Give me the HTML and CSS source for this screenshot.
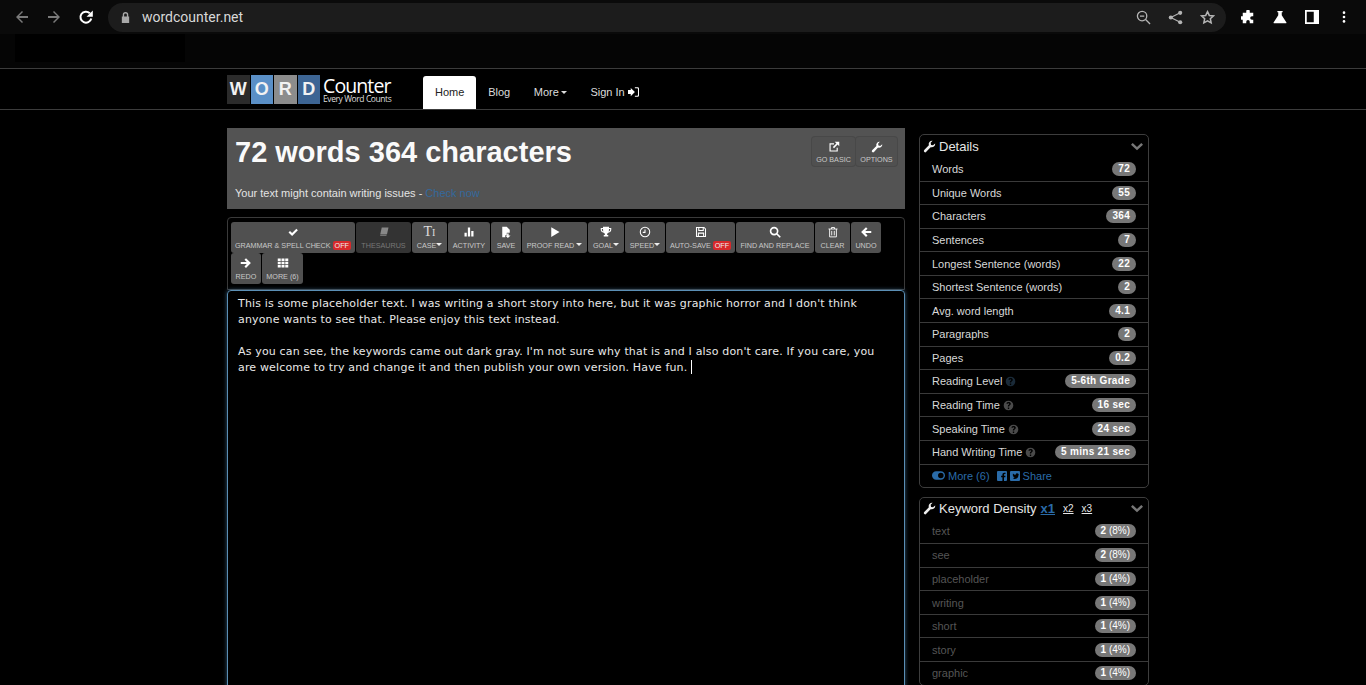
FILE: index.html
```html
<!DOCTYPE html>
<html lang="en">
<head>
  <meta charset="UTF-8">
  <meta name="viewport" content="width=device-width, initial-scale=1.0">
  <title>Word Counter</title>
  <link rel="stylesheet" href="styles.css">
</head>
<body>
<svg class="sprites" width="0" height="0">
  <symbol id="i-wrench" viewBox="0 0 16 16"><path d="M15 4.200a4.300 4.300 0 0 1-5.600 4.600L4 14.600a1.600 1.600 0 0 1-2.500-2.200L7.200 6.600A4.300 4.300 0 0 1 11.800 1L9.400 3.500l.5 2.500 2.400.6z"/></symbol>
  <symbol id="i-help" viewBox="0 0 16 16"><path fill-rule="evenodd" d="M8 1a7 7 0 1 0 0 14A7 7 0 0 0 8 1zM7 11h2v2H7zm1-8c2 0 3.300 1 3.300 2.600 0 1.300-.8 1.900-1.500 2.400-.6.400-.8.600-.8 1.200v.3H7v-.5c0-1.100.5-1.700 1.200-2.200.6-.4.900-.7.900-1.100 0-.5-.4-.8-1.100-.8-.8 0-1.400.4-1.900 1L4.800 4.600C5.600 3.600 6.600 3 8 3z"/></symbol>
</svg>

<div class="chrome-bar">
  <div class="chrome-nav">
    <svg class="ic-dim" viewBox="0 0 16 16"><path d="M14 7H5l4-4-1-1-6 6 6 6 1-1-4-4h9z"/></svg>
    <svg class="ic-dim" viewBox="0 0 16 16"><path d="M2 7h9L7 3l1-1 6 6-6 6-1-1 4-4H2z"/></svg>
    <svg viewBox="0 0 16 16"><path d="M13.300 9.500a5.500 5.500 0 1 1-1.500-5.300" fill="none" stroke="#fff" stroke-width="2"/><path d="M14.800 1.500v6.300H8.500z" fill="#fff"/></svg>
  </div>
  <div class="omnibox">
    <svg class="lock" viewBox="0 0 12 14"><path d="M3 6V4a3 3 0 0 1 6 0v2h1v7H2V6zm1.500 0h3V4a1.500 1.500 0 0 0-3 0z"/></svg>
    <span class="url">wordcounter.net</span>
    <div class="omni-icons">
      <svg viewBox="0 0 16 16" fill="none" stroke="#b5b5b5" stroke-width="1.400"><circle cx="6.500" cy="6.500" r="5"/><path d="M10.200 10.200 15 15M4.200 6.500h4.600"/></svg>
      <svg viewBox="0 0 16 16" fill="#b5b5b5"><circle cx="13" cy="3" r="2.200"/><circle cx="3" cy="8" r="2.200"/><circle cx="13" cy="13" r="2.200"/><path d="M3 8l10-5M3 8l10 5" stroke="#b5b5b5" stroke-width="1.200"/></svg>
      <svg viewBox="0 0 16 16" fill="none" stroke="#b5b5b5" stroke-width="1.600"><path d="M8 1.800l1.900 4 4.400.5-3.300 3 .9 4.400L8 11.500l-3.900 2.200.9-4.400-3.300-3 4.400-.5z"/></svg>
    </div>
  </div>
  <div class="chrome-ext">
    <svg viewBox="0 0 16 16"><path d="M6 1.500a2 2 0 0 1 4 0V3h4v4h-1.500a2 2 0 0 0 0 4H14v4h-4v-1.500a2 2 0 0 0-4 0V15H2v-4H.5a2 2 0 0 1 0-4H2V3h4z"/></svg>
    <svg viewBox="0 0 16 16"><path d="M5 1h6v1.500h-1V6l5.500 8.500a.6.600 0 0 1-.5.500H1a.6.600 0 0 1-.5-.5L6 6V2.500H5z"/></svg>
    <svg viewBox="0 0 16 16"><path fill-rule="evenodd" d="M0 0h16v16H0zm2 2v12h8V2z"/></svg>
    <svg viewBox="0 0 16 16"><circle cx="8" cy="3" r="1.500"/><circle cx="8" cy="8" r="1.500"/><circle cx="8" cy="13" r="1.500"/></svg>
  </div>
</div>

<div class="bookmarks"></div>

<nav class="site-nav">
  <div class="wrap nav-inner">
    <div class="logo">
      <div class="logo-tiles">
        <span class="tile t-w">W</span><span class="tile t-o">O</span><span class="tile t-r">R</span><span class="tile t-d">D</span>
      </div>
      <div class="logo-text">
        <span class="logo-big">Counter</span>
        <span class="logo-small">Every Word Counts</span>
      </div>
    </div>
    <ul class="nav-links">
      <li class="active">Home</li>
      <li>Blog</li>
      <li>More<i class="caret"></i></li>
      <li>Sign In
        <svg class="signin" viewBox="0 0 16 14"><path d="M0 4h4V1l6 6-6 6v-3H0z"/><path d="M10 0h4a2 2 0 0 1 2 2v10a2 2 0 0 1-2 2h-4v-1.500h3.500a1 1 0 0 0 1-1v-9a1 1 0 0 0-1-1H10z"/></svg>
      </li>
    </ul>
  </div>
</nav>

<main class="wrap columns">
  <section class="left">
    <div class="counter-box">
      <div class="counter-top">
        <h1>72 words 364 characters</h1>
        <div class="tools">
          <button class="tbtn b-basic">
            <svg class="ic" viewBox="0 0 16 16"><path d="M2 3h6v1.500H3.500v8h8V9H13v5H2z"/><path d="M9 1h6v6l-2.200-2.200L8 9.500 6.500 8l4.700-4.800z"/></svg>
            GO BASIC
          </button>
          <button class="tbtn b-options">
            <svg class="ic" viewBox="0 0 16 16"><use href="#i-wrench"/></svg>
            OPTIONS
          </button>
        </div>
      </div>
      <p class="issues">Your text might contain writing issues - <a>Check now</a></p>
    </div>

    <div class="toolbar">
      <button class="tbtn b-grammar">
        <svg class="ic" viewBox="0 0 16 16"><path d="M2 8.500 4 6.500l2.800 2.800L12.500 3.500l2 2-7.700 7.700z"/></svg>
        <span>GRAMMAR &amp; SPELL CHECK <b class="off">OFF</b></span>
      </button>
      <button class="tbtn tbtn-dim b-thesaurus">
        <svg class="ic" viewBox="0 0 16 16"><path d="M5 2h9l-2 9H3zM3 11.500h8.500l-.3 1.500H3.500a1 1 0 0 1-.5-1.500z"/></svg>
        THESAURUS
      </button>
      <button class="tbtn b-case">
        <span class="tt">T<small>I</small></span>
        <span>CASE<i class="caret caret-tight"></i></span>
      </button>
      <button class="tbtn b-activity">
        <svg class="ic" viewBox="0 0 16 16"><path d="M2 9h3v5H2zM6.500 2h3v12h-3zM11 6.500h3V14h-3z"/></svg>
        ACTIVITY
      </button>
      <button class="tbtn b-save">
        <svg class="ic" viewBox="0 0 16 16"><path d="M3 1h6l4 4v4H9v3H7v3H3z"/><path d="M9.500 10h2v2.500H14L10.500 16 7 12.500h2.500z"/></svg>
        SAVE
      </button>
      <button class="tbtn b-proof">
        <svg class="ic" viewBox="0 0 16 16"><path d="M3 1.500 14 8 3 14.500z"/></svg>
        <span>PROOF READ <i class="caret caret-tight"></i></span>
      </button>
      <button class="tbtn b-goal">
        <svg class="ic" viewBox="0 0 16 16"><path fill-rule="evenodd" d="M4 1h8v1.500h3V5c0 2-1.500 3.500-4 4-.4.600-1 1-1.500 1.200V12H11v2H5v-2h1.500v-1.800C6 10 5.400 9.600 5 9 2.500 8.500 1 7 1 5V2.500h3zM2.500 4v1c0 1 .7 1.900 1.900 2.400C4.100 6.400 4 5.200 4 4zm11 0H12c0 1.200-.1 2.400-.4 3.400 1.200-.5 1.900-1.400 1.900-2.400z"/></svg>
        <span>GOAL<i class="caret caret-tight"></i></span>
      </button>
      <button class="tbtn b-speed">
        <svg class="ic ic-line" viewBox="0 0 16 16" stroke-width="1.400"><circle cx="8" cy="8" r="6.300"/><path d="M8 4.500V8.500H5"/></svg>
        <span>SPEED<i class="caret caret-tight"></i></span>
      </button>
      <button class="tbtn b-autosave">
        <svg class="ic ic-line" viewBox="0 0 16 16" stroke-width="1.400"><path d="M2 2h10l2 2v10H2z"/><path d="M5 2v4h6V2M4.500 14V9.500h7V14"/></svg>
        <span>AUTO-SAVE <b class="off">OFF</b></span>
      </button>
      <button class="tbtn b-find">
        <svg class="ic ic-line" viewBox="0 0 16 16" stroke-width="2.200"><circle cx="6.800" cy="6.800" r="4.700"/><path d="M10.300 10.300 15 15"/></svg>
        FIND AND REPLACE
      </button>
      <button class="tbtn b-clear">
        <svg class="ic ic-line" viewBox="0 0 16 16" stroke-width="1.200"><path d="M2 4h12M6 4V2h4v2M3.500 4v10.500h9V4M6.300 6.500v6M9.700 6.500v6"/></svg>
        CLEAR
      </button>
      <button class="tbtn b-undo">
        <svg class="ic" viewBox="0 0 16 16"><path d="M8 1.500 10 3.500 7 6.600h8v2.800H7l3 3.100-2 2L1.500 8z"/></svg>
        UNDO
      </button>
      <button class="tbtn b-undo">
        <svg class="ic" viewBox="0 0 16 16"><path d="M8 1.500 6 3.500 9 6.600H1v2.800h8l-3 3.100 2 2L14.500 8z"/></svg>
        REDO
      </button>
      <button class="tbtn b-more">
        <svg class="ic" viewBox="0 0 16 16"><path d="M1 2h4v3.300H1zM6 2h4v3.300H6zM11 2h4v3.300h-4zM1 6.300h4v3.300H1zM6 6.300h4v3.300H6zM11 6.300h4v3.300h-4zM1 10.700h4V14H1zM6 10.700h4V14H6zM11 10.700h4V14h-4z"/></svg>
        MORE (6)
      </button>
    </div>

    <div class="editor">
      <p>This is some placeholder text. I was writing a short story into here, but it was graphic horror and I don't think anyone wants to see that. Please enjoy this text instead.</p>
      <p>As you can see, the keywords came out dark gray. I'm not sure why that is and I also don't care. If you care, you are welcome to try and change it and then publish your own version. Have fun. <span class="cursor"></span></p>
    </div>
  </section>

  <aside class="right">
    <div class="panel">
      <div class="panel-head">
        <svg class="wrench" viewBox="0 0 16 16"><use href="#i-wrench"/></svg>
        <span>Details</span>
        <svg class="chev" viewBox="0 0 14 10"><path d="M2 1 7 5.500 12 1l2 2-7 6.500L0 3z"/></svg>
      </div>
      <div class="row"><span>Words</span><b class="pill">72</b></div>
      <div class="row"><span>Unique Words</span><b class="pill">55</b></div>
      <div class="row"><span>Characters</span><b class="pill">364</b></div>
      <div class="row"><span>Sentences</span><b class="pill">7</b></div>
      <div class="row"><span>Longest Sentence (words)</span><b class="pill">22</b></div>
      <div class="row"><span>Shortest Sentence (words)</span><b class="pill">2</b></div>
      <div class="row"><span>Avg. word length</span><b class="pill">4.1</b></div>
      <div class="row"><span>Paragraphs</span><b class="pill">2</b></div>
      <div class="row"><span>Pages</span><b class="pill">0.2</b></div>
      <div class="row"><span>Reading Level <svg class="help help-blue"><use href="#i-help"/></svg></span><b class="pill">5-6th Grade</b></div>
      <div class="row"><span>Reading Time <svg class="help"><use href="#i-help"/></svg></span><b class="pill">16 sec</b></div>
      <div class="row"><span>Speaking Time <svg class="help"><use href="#i-help"/></svg></span><b class="pill">24 sec</b></div>
      <div class="row"><span>Hand Writing Time <svg class="help"><use href="#i-help"/></svg></span><b class="pill">5 mins 21 sec</b></div>
      <div class="panel-foot">
        <svg class="toggle" viewBox="0 0 14 9"><path fill-rule="evenodd" d="M4.500 0h5a4.500 4.500 0 0 1 0 9h-5a4.500 4.500 0 0 1 0-9zm5 1.500a3 3 0 1 0 0 6 3 3 0 0 0 0-6z"/></svg>
        <a>More (6)</a>
        <svg class="social social-fb" viewBox="0 0 10 10"><path d="M1 0h8a1 1 0 0 1 1 1v8a1 1 0 0 1-1 1H7V6.200h1.300l.2-1.500H7v-1c0-.4.200-.7.700-.7h.8V1.700H7.300C6 1.700 5.400 2.500 5.400 3.600v1.100H4.100v1.500h1.300V10H1a1 1 0 0 1-1-1V1a1 1 0 0 1 1-1z"/></svg>
        <svg class="social" viewBox="0 0 10 10"><path d="M1 0h8a1 1 0 0 1 1 1v8a1 1 0 0 1-1 1H1a1 1 0 0 1-1-1V1a1 1 0 0 1 1-1zm6.700 2.500c-.9-.5-2.100.2-2 1.300-1.100 0-2-.5-2.700-1.300-.4.700-.2 1.500.4 2l-.6-.2c0 .8.500 1.300 1.200 1.500h-.6c.2.600.7 1 1.400 1-.6.500-1.300.7-2.100.6 2.600 1.500 5.900-.1 5.800-3.600l.6-.7-.7.200.6-.7-.8.300z"/></svg>
        <a>Share</a>
      </div>
    </div>

    <div class="panel">
      <div class="panel-head">
        <svg class="wrench" viewBox="0 0 16 16"><use href="#i-wrench"/></svg>
        <span>Keyword Density</span>
        <a class="x-link x-on">x1</a><a class="x-link">x2</a><a class="x-link">x3</a>
        <svg class="chev" viewBox="0 0 14 10"><path d="M2 1 7 5.500 12 1l2 2-7 6.500L0 3z"/></svg>
      </div>
      <div class="row row-kw"><span>text</span><b class="pill">2 <i class="pct">(8%)</i></b></div>
      <div class="row row-kw"><span>see</span><b class="pill">2 <i class="pct">(8%)</i></b></div>
      <div class="row row-kw"><span>placeholder</span><b class="pill">1 <i class="pct">(4%)</i></b></div>
      <div class="row row-kw"><span>writing</span><b class="pill">1 <i class="pct">(4%)</i></b></div>
      <div class="row row-kw"><span>short</span><b class="pill">1 <i class="pct">(4%)</i></b></div>
      <div class="row row-kw"><span>story</span><b class="pill">1 <i class="pct">(4%)</i></b></div>
      <div class="row row-kw"><span>graphic</span><b class="pill">1 <i class="pct">(4%)</i></b></div>
    </div>
  </aside>
</main>
</body>
</html>
```

FILE: styles.css
```css
* {
  box-sizing: border-box;
}

html, body {
  height: 685px;
  overflow: hidden;
}

body {
  margin: 0;
  background: #000;
  color: #fff;
  font-family: "Liberation Sans", Arial, sans-serif;
  font-size: 11px;
}

.sprites {
  position: absolute;
}

/* browser chrome */
.chrome-bar {
  height: 34px;
  background: #0a0a0a;
  display: flex;
  align-items: center;
  padding-left: 14px;
}

.chrome-nav {
  display: flex;
  gap: 16px;
  width: 94px;
}

.chrome-nav svg {
  width: 16px;
  height: 16px;
}

.ic-dim {
  fill: #7a7a7a;
}

.omnibox {
  width: 1118px;
  height: 29px;
  background: #1c1c1c;
  border-radius: 15px;
  display: flex;
  align-items: center;
  padding-left: 12px;
}

.lock {
  width: 11px;
  height: 13px;
  fill: #a8a8a8;
}

.url {
  margin-left: 11px;
  font-family: Roboto, sans-serif;
  font-size: 14px;
  color: #d8d8d8;
}

.omni-icons {
  margin-left: auto;
  display: flex;
  gap: 17px;
  padding-right: 11px;
}

.omni-icons svg {
  width: 15px;
  height: 15px;
}

.chrome-ext {
  display: flex;
  gap: 18px;
  margin-left: 15px;
}

.chrome-ext svg {
  width: 14px;
  height: 14px;
  fill: #fff;
}

.bookmarks {
  height: 34px;
  background: #050505;
  background-image: linear-gradient(#000, #000);
  background-size: 170px 28px;
  background-repeat: no-repeat;
  background-position: 15px 0;
}

/* site nav */
.wrap {
  width: 922px;
  margin-left: 227px;
}

.site-nav {
  height: 42px;
  border-top: 1px solid #3c3c3c;
  border-bottom: 1px solid #3c3c3c;
}

.nav-inner {
  display: flex;
  height: 40px;
}

.logo {
  display: flex;
  align-items: flex-start;
  padding-top: 6px;
  width: 196px;
}

.logo-tiles {
  display: flex;
  gap: 1px;
}

.tile {
  width: 22.500px;
  height: 29px;
  display: flex;
  align-items: center;
  justify-content: center;
  font-weight: bold;
  font-size: 18px;
  color: #f2f2f2;
}

.t-w { background: #2b2b2b; }
.t-o { background: #5a8fc6; }
.t-r { background: #8c8c8c; }
.t-d { background: #3d6594; }

.logo-text {
  margin-left: 3px;
  padding-top: 2px;
  display: flex;
  flex-direction: column;
}

.logo-big {
  font-family: "Open Sans", sans-serif;
  font-size: 19.500px;
  line-height: 18px;
  letter-spacing: -0.900px;
}

.logo-small {
  font-family: "Open Sans", sans-serif;
  font-size: 8.500px;
  line-height: 8px;
  letter-spacing: -0.420px;
  color: #ddd;
}

.nav-links {
  list-style: none;
  display: flex;
  margin: 0;
  padding: 0;
  font-size: 11px;
  line-height: 33px;
  padding-top: 7px;
}

.nav-links li {
  padding: 0 11.800px;
  color: #ddd;
}

.nav-links .active {
  padding: 0 12px;
  background: #fff;
  color: #222;
  border-radius: 3px 3px 0 0;
}

.caret {
  display: inline-block;
  margin-left: 2px;
  vertical-align: 2px;
  border-top: 3px solid currentColor;
  border-left: 3px solid transparent;
  border-right: 3px solid transparent;
}

.caret-tight {
  margin-left: 0;
  color: #eee;
}

.signin {
  width: 11px;
  height: 10px;
  fill: #fff;
  vertical-align: -1px;
}

/* columns */
.columns {
  display: flex;
  gap: 14px;
  padding-top: 18px;
}

.left {
  width: 678px;
}

.right {
  width: 230px;
  padding-top: 6px;
}

.counter-box {
  background: #535353;
  height: 81px;
  padding: 8px 8px 0;
}

.counter-top {
  display: flex;
  justify-content: space-between;
}

h1 {
  margin: 0;
  font-size: 29px;
  line-height: 32px;
  font-weight: bold;
  color: #fafafa;
}

.tools {
  display: flex;
  gap: 1px;
  margin-top: 1px;
}

.issues {
  margin: 19px 0 0;
  font-size: 11px;
  color: #e4e4e4;
}

.issues a {
  color: #33699d;
}

.tbtn {
  background: #505050;
  border: 0;
  border-radius: 3px;
  color: #c9c9c9;
  font-family: "Liberation Sans", Arial, sans-serif;
  font-size: 7.200px;
  height: 31px;
  padding: 4px 0 0;
  display: flex;
  flex-direction: column;
  align-items: center;
  justify-content: flex-start;
  gap: 3px;
  white-space: nowrap;
  text-transform: uppercase;
}

.tools .tbtn {
  height: 29px;
  gap: 2px;
  box-shadow: 0 0 0 1px #484848;
}

.b-basic { width: 43px; }
.b-options { width: 41px; }
.b-grammar { width: 124px; }
.b-thesaurus { width: 55px; }
.b-case { width: 35px; }
.b-activity { width: 42px; }
.b-save { width: 30px; }
.b-proof { width: 65px; }
.b-goal { width: 36px; }
.b-speed { width: 40px; }
.b-autosave { width: 69px; }
.b-find { width: 78px; }
.b-clear { width: 35px; }
.b-undo { width: 30px; }
.b-more { width: 41px; }

.tbtn-dim {
  background: #333;
  color: #777;
}

.tbtn-dim .ic {
  fill: #888;
}

.ic {
  width: 12px;
  height: 12px;
  fill: #fff;
}

.ic-line {
  fill: none;
  stroke: #fff;
}

.tt {
  font-family: "Liberation Serif", serif;
  font-size: 14px;
  line-height: 12px;
  height: 12px;
  color: #ddd;
}

.tt small {
  font-size: 10px;
}

.off {
  background: #d9292b;
  color: #eee;
  padding: 0 2px;
  border-radius: 2px;
  font-weight: normal;
}

.toolbar {
  margin-top: 8px;
  height: 73px;
  border: 1px solid #3a3a3a;
  border-radius: 4px 4px 0 0;
  padding: 4px 3px;
  display: flex;
  flex-wrap: wrap;
  align-content: flex-start;
  gap: 0 1px;
}

.editor {
  height: 400px;
  border: 1px solid #5b8fb5;
  border-radius: 4px;
  box-shadow: 0 0 4px rgba(102, 175, 233, 0.5);
  padding: 5px 10px;
  font-family: "DejaVu Sans", Verdana, sans-serif;
  font-size: 11px;
  letter-spacing: 0.160px;
  line-height: 16px;
  color: #e8e8e8;
}

.editor p {
  margin: 0 0 16px;
}

.cursor {
  display: inline-block;
  width: 1px;
  height: 14px;
  background: #fff;
  vertical-align: -3px;
}

/* side panels */
.panel {
  border: 1px solid #3d3d3d;
  border-radius: 5px;
  margin-bottom: 9px;
}

.panel-head {
  height: 22px;
  display: flex;
  align-items: center;
  padding-left: 3px;
  font-size: 13px;
  color: #e6e6e6;
}

.wrench {
  width: 13px;
  height: 13px;
  fill: #eee;
  margin-right: 3px;
}

.chev {
  margin-left: auto;
  margin-right: 5px;
  width: 12px;
  height: 9px;
  fill: #777;
}

.x-link {
  margin-left: 8px;
  font-size: 10px;
  text-decoration: underline;
}

.x-on {
  margin-left: 4px;
  font-size: 13px;
  font-weight: bold;
  color: #2a6ba8;
}

.row {
  height: 23.580px;
  border-top: 1px solid #3a3a3a;
  display: flex;
  align-items: center;
  justify-content: space-between;
  padding: 0 12px;
  color: #d8d8d8;
  font-size: 11px;
}

.panel-head + .row {
  border-top: 0;
}

.row-kw {
  color: #555;
}

.pill {
  background: #777;
  color: #fff;
  border-radius: 8px;
  padding: 2px 6px;
  font-size: 10px;
  line-height: 10px;
  letter-spacing: 0.300px;
}

.row-kw .pill {
  letter-spacing: 0;
  padding: 2px 6px;
}

.pct {
  font-style: normal;
  font-weight: normal;
}

.help {
  width: 11px;
  height: 11px;
  fill: #4a4a4a;
  vertical-align: -2px;
}

.help-blue {
  fill: #1a2a38;
}

.panel-foot {
  height: 23px;
  border-top: 1px solid #3a3a3a;
  display: flex;
  align-items: center;
  padding-left: 12px;
  gap: 3px;
  color: #2a6ba8;
  font-size: 11px;
}

.toggle {
  width: 13px;
  height: 9px;
  fill: #2a6ba8;
}

.social {
  width: 10px;
  height: 10px;
  fill: #2a6ba8;
}

.social-fb {
  margin-left: 4px;
}
```
